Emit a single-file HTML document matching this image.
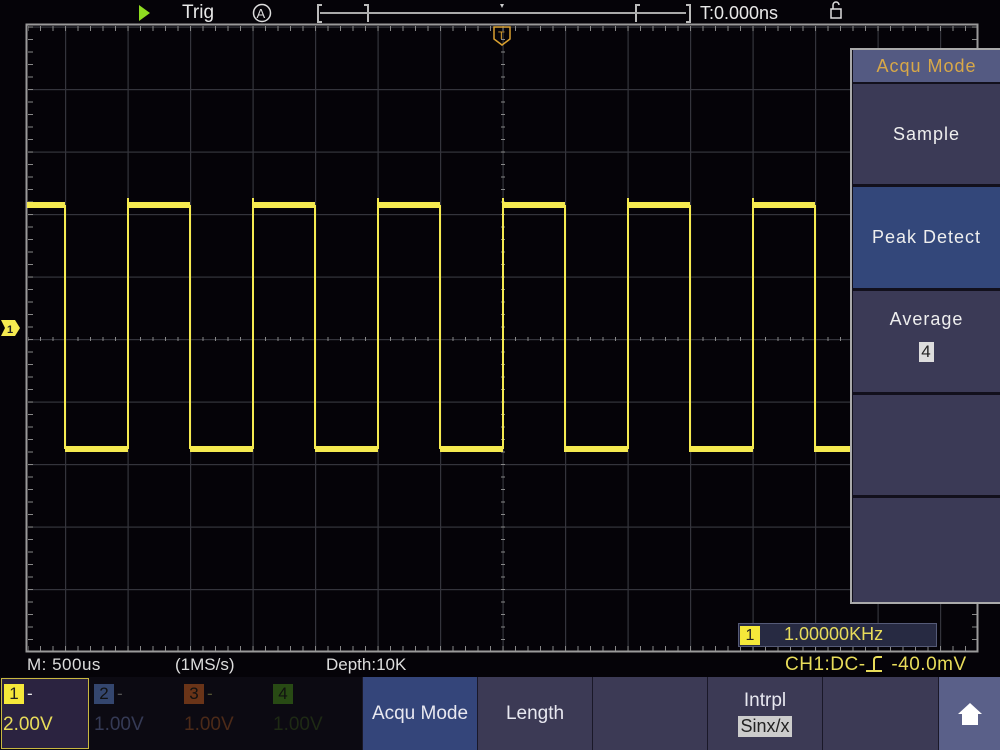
<!DOCTYPE html>
<html><head><meta charset="utf-8"><style>
*{margin:0;padding:0;box-sizing:border-box}
body{width:1000px;height:750px;background:#050308;position:relative;overflow:hidden;font-family:"Liberation Sans Narrow","Liberation Sans",sans-serif;color:#ddd}
.a{position:absolute;white-space:nowrap}
.btn{position:absolute;top:677px;height:73px;background:#3c3a55;border-left:1px solid #1a1828;color:#e8e8f0;font-size:19px;display:flex;align-items:center;justify-content:center;flex-direction:column}
.pn{position:absolute;left:853px;width:147px;background:#3b3a56;color:#eee;font-family:"Liberation Sans",sans-serif;font-size:18px;letter-spacing:1px;display:flex;flex-direction:column;align-items:center;justify-content:center}
</style></head><body>
<svg class="a" style="left:0;top:0" width="1000" height="750">
<defs>
<pattern id="gv" patternUnits="userSpaceOnUse" x="65" y="0" width="62.5" height="10"><rect x="0" y="0" width="1.2" height="10" fill="#34343c"/></pattern>
<pattern id="gh" patternUnits="userSpaceOnUse" x="0" y="89" width="10" height="62.5"><rect x="0" y="0" width="10" height="1.2" fill="#34343c"/></pattern>
<pattern id="tx" patternUnits="userSpaceOnUse" x="27.5" y="0" width="12.5" height="10"><rect x="0" y="0" width="1" height="10" fill="#888"/></pattern>
<pattern id="ty" patternUnits="userSpaceOnUse" x="0" y="26.5" width="10" height="12.5"><rect x="0" y="0" width="10" height="1" fill="#888"/></pattern>
</defs>
<rect x="28" y="26" width="949" height="625" fill="url(#gv)"/>
<rect x="28" y="26" width="949" height="625" fill="url(#gh)"/>
<rect x="28" y="26" width="949" height="5" fill="url(#tx)"/>
<rect x="28" y="646" width="949" height="5" fill="url(#tx)"/>
<rect x="28" y="26" width="5" height="625" fill="url(#ty)"/>
<rect x="972" y="26" width="5" height="625" fill="url(#ty)"/>
<rect x="28" y="337" width="949" height="4" fill="url(#tx)"/>
<rect x="501" y="26" width="4" height="625" fill="url(#ty)"/>
<rect x="26.5" y="24.5" width="951" height="627" fill="none" stroke="#9a9a9a" stroke-width="2"/>
<g fill="#f5ea50">
<rect x="27" y="202" width="38" height="6"/><rect x="65" y="446" width="63" height="6"/>
<rect x="128" y="202" width="62" height="6"/><rect x="190" y="446" width="63" height="6"/>
<rect x="253" y="202" width="62" height="6"/><rect x="315" y="446" width="63" height="6"/>
<rect x="378" y="202" width="62" height="6"/><rect x="440" y="446" width="63" height="6"/>
<rect x="503" y="202" width="62" height="6"/><rect x="565" y="446" width="63" height="6"/>
<rect x="628" y="202" width="62" height="6"/><rect x="690" y="446" width="63" height="6"/>
<rect x="753" y="202" width="62" height="6"/><rect x="815" y="446" width="40" height="6"/>
</g>
<g stroke="#f5ea50" stroke-width="2">
<path d="M65 205V449M128 198V449M190 205V449M253 198V449M315 205V449M378 198V449M440 205V449M503 198V449M565 205V452M628 198V449M690 205V452M753 198V449M815 205V452"/>
</g>
<path d="M1 320h14l5 8-5 8H1l4-8z" fill="#f5ea50"/><text x="7" y="333" font-size="11" font-weight="bold" fill="#222" font-family="Liberation Sans">1</text>
<path d="M494 27h16v12l-8 6-8-6z" fill="none" stroke="#d9a030" stroke-width="1.5"/><text x="498" y="39" font-size="11" fill="#d9a030" font-family="Liberation Sans">T</text>
<path d="M139 5l11 8-11 8z" fill="#8fdc20"/>
<circle cx="262" cy="13" r="8.5" fill="none" stroke="#ddd" stroke-width="1.5"/><text x="256.5" y="18" font-size="13" fill="#ddd" font-family="Liberation Sans">A</text>
<path d="M322 5h-4v17h4M364 5h4v17M640 5h-4v17M686 5h4v17h-4" fill="none" stroke="#bbb" stroke-width="2"/>
<path d="M320 13h366" stroke="#aaa" stroke-width="2"/><path d="M500 4h4l-2 4z" fill="#ccc"/>
<path d="M831 18V9h10v9zM833 9V5a3 3 0 0 1 6 0" fill="none" stroke="#ddd" stroke-width="1.5"/>
</svg>
<div class="a" style="left:182px;top:2px;font-size:19px;color:#e8e8e8">Trig</div>
<div class="a" style="left:700px;top:3px;font-size:18px;color:#e8e8e8">T:0.000ns</div>

<div class="a" style="left:850px;top:48px;width:150px;height:556px;background:#12101c;border:2px solid #aaa;border-right:none"></div>
<div class="pn" style="top:50px;height:32px;background:#545a82;color:#d8a848;font-size:18px">Acqu Mode</div>
<div class="pn" style="top:84px;height:100px">Sample</div>
<div class="pn" style="top:187px;height:101px;background:#33477a">Peak Detect</div>
<div class="pn" style="top:291px;height:101px;justify-content:flex-start;padding-top:18px">Average<span style="margin-top:12px;background:#ddd;color:#222;font-size:17px;padding:0 2px">4</span></div>
<div class="pn" style="top:395px;height:100px"></div>
<div class="pn" style="top:498px;height:104px"></div>

<div class="a" style="left:738px;top:623px;width:199px;height:24px;background:#272a42;border:1px solid #555a77"></div>
<div class="a" style="left:740px;top:626px;width:20px;height:19px;background:#f5e83a;color:#222;font-size:16px;text-align:center;line-height:19px">1</div>
<div class="a" style="left:784px;top:624px;font-size:18px;color:#e8dc5a">1.00000KHz</div>

<div class="a" style="left:27px;top:655px;font-size:17px;color:#ddd;letter-spacing:0.5px">M: 500us</div>
<div class="a" style="left:175px;top:655px;font-size:17px;color:#ddd">(1MS/s)</div>
<div class="a" style="left:326px;top:655px;font-size:17px;color:#ddd">Depth:10K</div>
<div class="a" style="left:785px;top:654px;font-size:19px;color:#e8dc5a;letter-spacing:0.5px">CH1:DC-<span style="display:inline-block;width:16px;height:16px;border-bottom:2px solid #e8dc5a;margin:0 4px 0 0;vertical-align:-2px;position:relative"><span style="position:absolute;left:7px;top:0;width:9px;height:16px;border-left:2px solid #e8dc5a;border-top:2px solid #e8dc5a;border-radius:4px 0 0 0"></span></span> -40.0mV</div>

<div class="a" style="left:0;top:677px;width:362px;height:73px;background:#0c0a12"></div>
<div class="a" style="left:1px;top:678px;width:88px;height:71px;background:#2b2340;border:1.5px solid #c8b840"></div>
<div class="a" style="left:4px;top:684px;width:20px;height:20px;background:#f5e83a;color:#222;font-size:17px;text-align:center;line-height:20px">1</div>
<div class="a" style="left:27px;top:684px;font-size:17px;color:#eee">-</div>
<div class="a" style="left:3px;top:714px;font-size:19px;color:#e8dc5a">2.00V</div>
<div class="a" style="left:94px;top:684px;width:20px;height:20px;background:#34466e;color:#111;font-size:17px;text-align:center;line-height:20px">2</div>
<div class="a" style="left:117px;top:684px;font-size:17px;color:#555">-</div>
<div class="a" style="left:94px;top:714px;font-size:19px;color:#353a55">1.00V</div>
<div class="a" style="left:184px;top:684px;width:20px;height:20px;background:#6a3418;color:#111;font-size:17px;text-align:center;line-height:20px">3</div>
<div class="a" style="left:207px;top:684px;font-size:17px;color:#553">-</div>
<div class="a" style="left:184px;top:714px;font-size:19px;color:#4c2a18">1.00V</div>
<div class="a" style="left:273px;top:684px;width:20px;height:20px;background:#284a14;color:#111;font-size:17px;text-align:center;line-height:20px">4</div>
<div class="a" style="left:273px;top:714px;font-size:19px;color:#1e2a14">1.00V</div>

<div class="btn" style="left:362px;width:115px;background:#34457a">Acqu Mode</div>
<div class="btn" style="left:477px;width:115px">Length</div>
<div class="btn" style="left:592px;width:115px"></div>
<div class="btn" style="left:707px;width:115px">Intrpl<span style="margin-top:4px;background:#ccc;color:#222;font-size:18px;padding:0 2px">Sinx/x</span></div>
<div class="btn" style="left:822px;width:116px"></div>
<div class="btn" style="left:938px;width:62px;background:#5a6089">
<svg width="28" height="26"><path d="M14 2L2 13h4v11h16V13h4z" fill="#fff"/></svg></div>
</body></html>
